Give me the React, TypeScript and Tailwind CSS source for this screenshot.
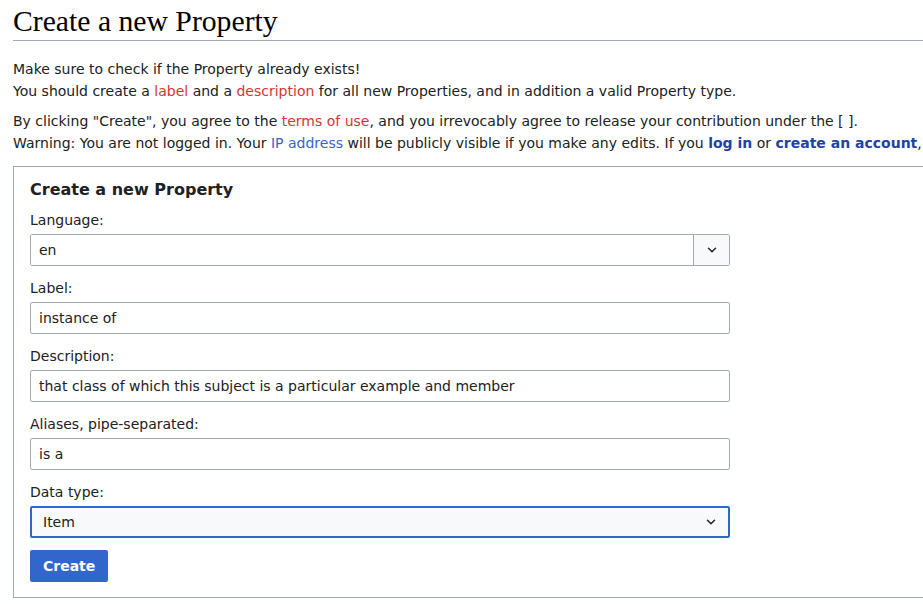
import { ChevronDown } from "lucide-react";

const sans = "font-['DejaVu_Sans',sans-serif]";

function Field({
  label,
  value,
  children,
}: {
  label: string;
  value?: string;
  children?: React.ReactNode;
}) {
  return (
    <div className="mb-[11px]">
      <div className="leading-[22px] mb-[3px]">{label}</div>
      {children ?? (
        <div className="w-[700px] h-8 border border-[#a2a9b1] rounded-[2px] bg-white pl-2 flex items-center">
          {value}
        </div>
      )}
    </div>
  );
}

export default function App() {
  return (
    <div className={`w-screen h-screen overflow-hidden bg-white text-[#202122] text-sm ${sans}`}>
      <div className="w-[1400px] pl-[13px]">
        <h1 className="font-['Liberation_Serif',serif] text-[29.7px] leading-[34px] pt-[4px] pb-[2px] border-b border-[#a2a9b1] text-black">
          Create a new Property
        </h1>

        <div className="mt-[17px] leading-[22px]">
          <p>Make sure to check if the Property already exists!</p>
          <p>
            You should create a <span className="text-[#d73333]">label</span> and a{" "}
            <span className="text-[#d73333]">description</span> for all new Properties, and in
            addition a valid Property type.
          </p>
        </div>

        <div className="mt-2 leading-[22px] whitespace-nowrap">
          <p>
            By clicking "Create", you agree to the{" "}
            <span className="text-[#d73333]">terms of use</span>, and you irrevocably agree to
            release your contribution under the [ ].
          </p>
          <p>
            Warning: You are not logged in. Your <span className="text-[#3366cc]">IP address</span>{" "}
            will be publicly visible if you make any edits. If you{" "}
            <b className="text-[#1c43a5]">log in</b> or{" "}
            <b className="text-[#1c43a5]">create an account</b>, your edits will be attributed to
            your username, along with other benefits.
          </p>
        </div>

        <div className="mt-3 border border-[#a2a9b1] pt-[12px] px-4 pb-[15px]">
          <div className="font-bold text-base leading-[22px] mb-[8px]">Create a new Property</div>

          <Field label="Language:">
            <div className="w-[700px] h-8 border border-[#a2a9b1] rounded-[2px] flex">
              <div className="flex-1 pl-2 flex items-center bg-white">en</div>
              <div className="w-9 border-l border-[#a2a9b1] bg-[#f8f9fa] flex items-center justify-center">
                <ChevronDown size={14} strokeWidth={2.5} className="text-[#202122]" />
              </div>
            </div>
          </Field>

          <Field label="Label:" value="instance of" />
          <Field
            label="Description:"
            value="that class of which this subject is a particular example and member"
          />
          <Field label="Aliases, pipe-separated:" value="is a" />

          <Field label="Data type:">
            <div className="w-[700px] h-8 border-2 border-[#3366cc] rounded-[2px] bg-[#f8f9fa] pl-[11px] pr-[10px] flex items-center justify-between">
              <span>Item</span>
              <ChevronDown size={14} strokeWidth={2.5} className="text-[#202122]" />
            </div>
          </Field>

          <button className="mt-[1px] h-8 px-[13px] rounded-[2px] bg-[#3366cc] text-white font-bold">
            Create
          </button>
        </div>
      </div>
    </div>
  );
}
